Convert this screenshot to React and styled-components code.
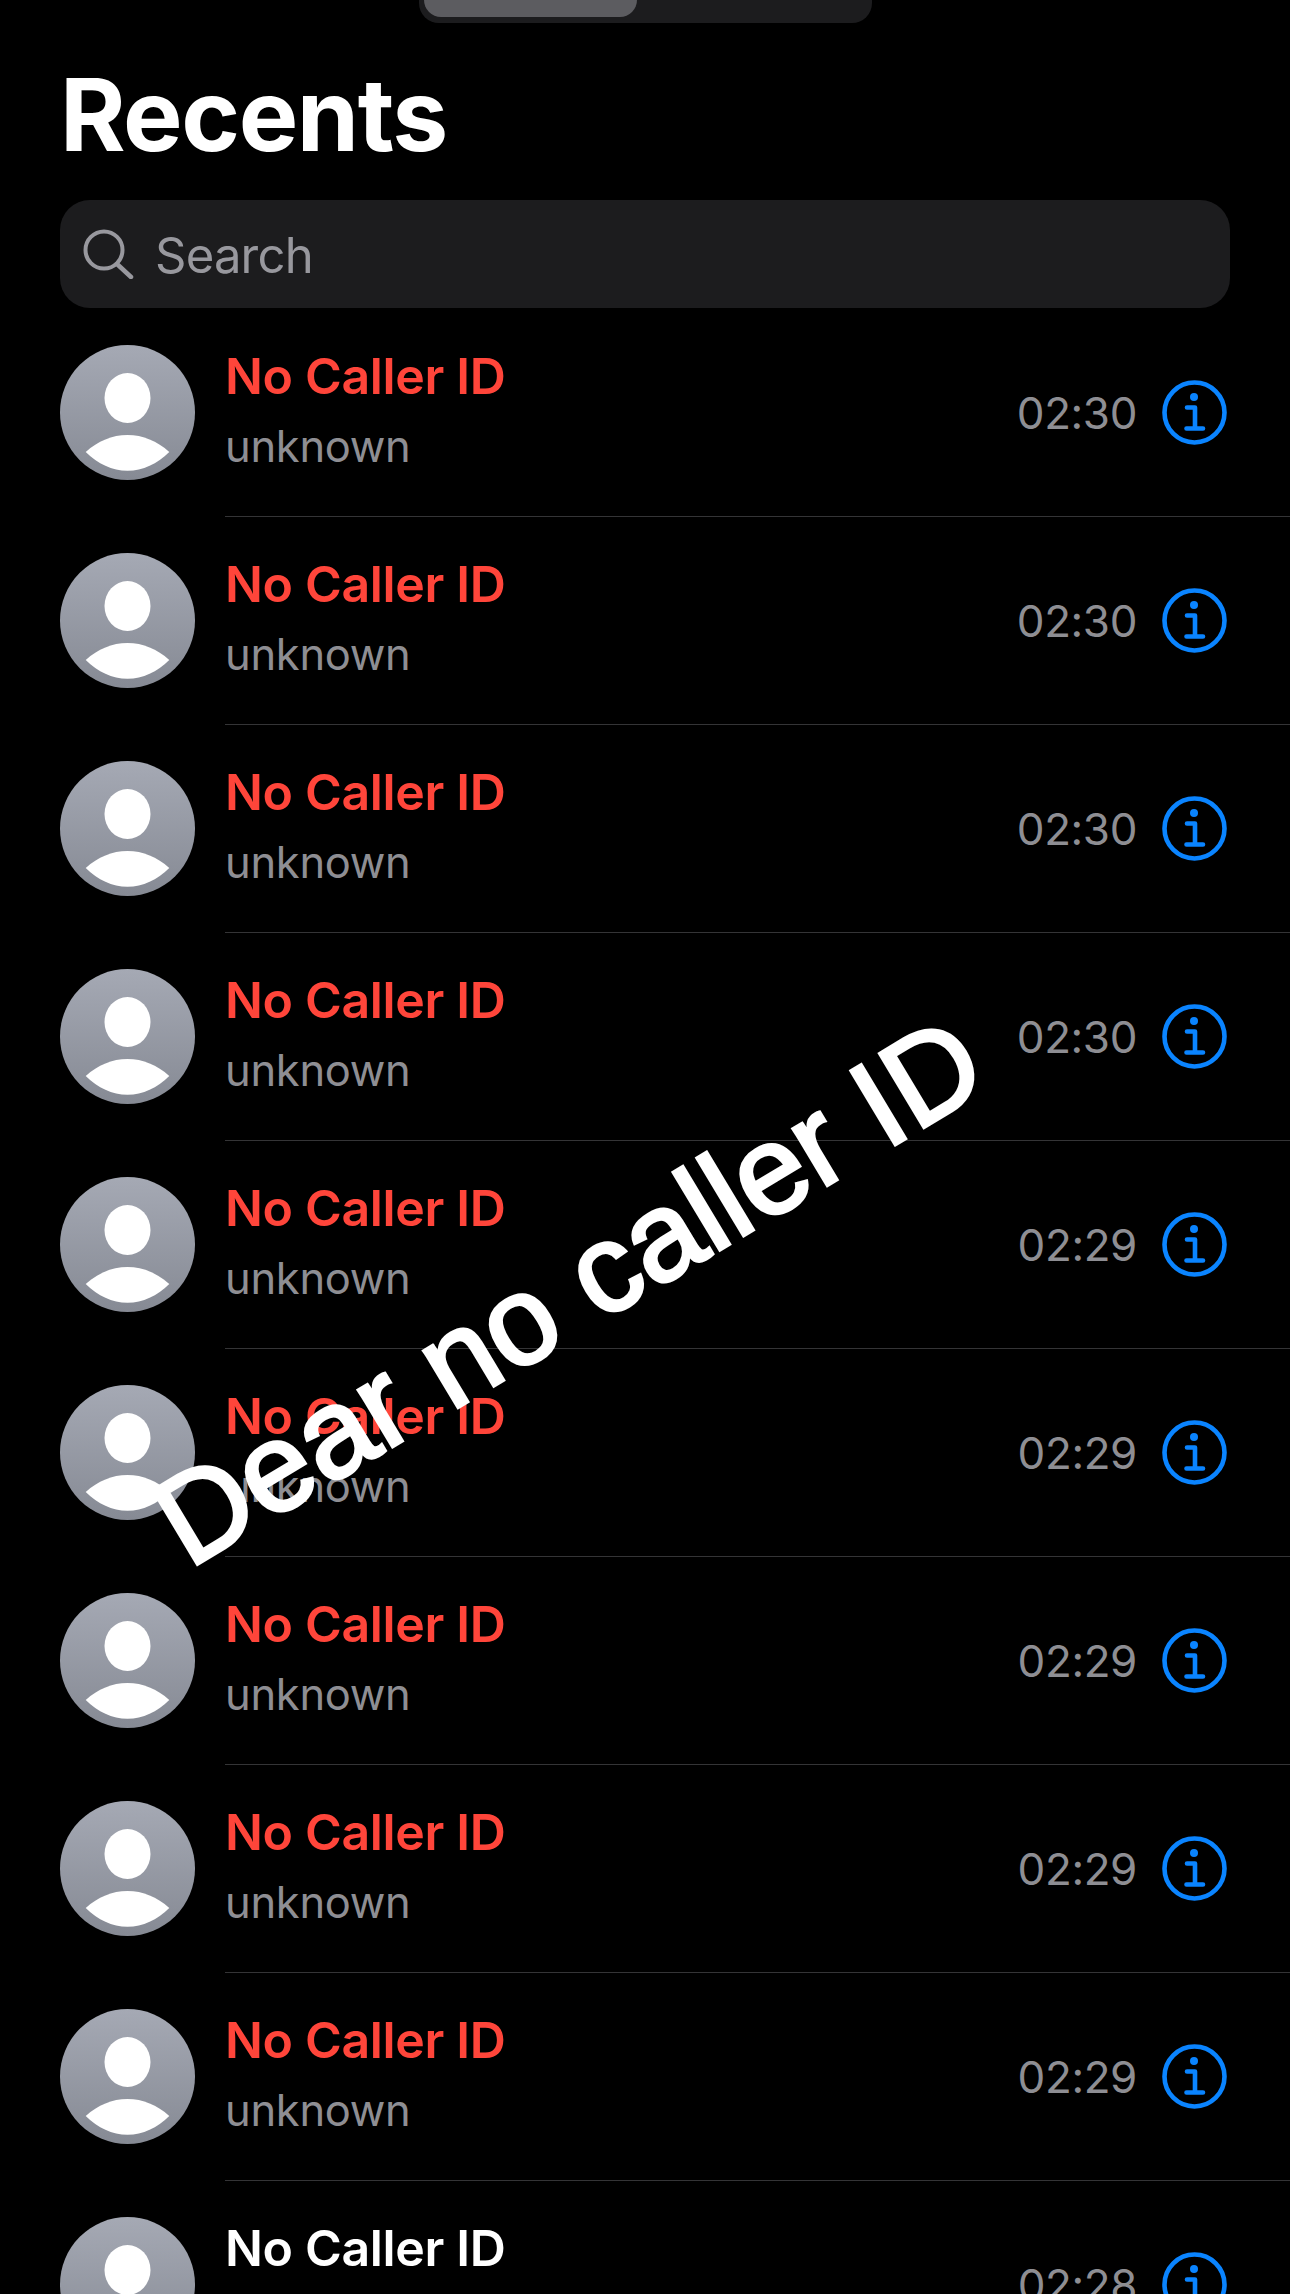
import React from 'react'
import styled, { createGlobalStyle } from 'styled-components'

const GlobalStyle = createGlobalStyle`
  html, body {
    margin: 0;
    padding: 0;
    background: #000;
  }
  body {
    font-family: Inter, "Liberation Sans", sans-serif;
    overflow: hidden;
  }
`

const Screen = styled.div`
  position: relative;
  width: 1290px;
  height: 2294px;
  overflow: hidden;
  background: #000;
`

const Segmented = styled.div`
  width: 453px;
  height: 23px;
  margin: 0 auto;
  padding-left: 5px;
  box-sizing: border-box;
  background: #1c1c1e;
  border-radius: 0 0 20px 20px;
`

const SegmentThumb = styled.div`
  width: 213px;
  height: 17px;
  background: #5c5c60;
  border-radius: 0 0 18px 18px;
`

const Title = styled.h1`
  margin: 36px 0 0 60px;
  font-size: 100px;
  line-height: 112px;
  font-weight: 700;
  letter-spacing: -1.4px;
  color: #fff;
`

const SearchBar = styled.div`
  display: flex;
  align-items: center;
  gap: 20px;
  width: 1170px;
  height: 108px;
  margin: 29px 0 1px 60px;
  padding-left: 23px;
  box-sizing: border-box;
  background: #1c1c1e;
  border-radius: 30px;
`

const SearchLabel = styled.span`
  font-size: 49px;
  color: #98989e;
  letter-spacing: -0.8px;
  margin-top: 3px;
`

const Row = styled.div`
  display: flex;
  align-items: center;
  gap: 30px;
  height: 208px;
  padding-left: 60px;
`

const Avatar = styled.svg`
  width: 135px;
  height: 135px;
  flex-shrink: 0;
  margin-top: -2px;
`

const RowBody = styled.div`
  flex: 1;
  display: flex;
  align-items: center;
  align-self: stretch;
  padding-right: 63px;
  border-bottom: 1px solid #343436;
`

const Labels = styled.div`
  flex: 1;
  display: flex;
  flex-direction: column;
  gap: 10px;
  margin-top: -4px;
`

const CallerName = styled.div`
  font-size: 50px;
  line-height: 60px;
  font-weight: 600;
  letter-spacing: -0.35px;
  color: ${(p) => (p.$missed ? '#ff453a' : '#fff')};
`

const CallType = styled.div`
  font-size: 43.5px;
  line-height: 60px;
  letter-spacing: -0.3px;
  color: #8e8e93;
`

const CallTime = styled.span`
  font-size: 44px;
  letter-spacing: -0.4px;
  color: #8e8e93;
  margin-right: 25px;
`

const InfoButton = styled.svg`
  width: 65px;
  height: 65px;
  flex-shrink: 0;
`

const Caption = styled.div`
  position: absolute;
  left: 200px;
  top: 1458px;
  font-family: "Liberation Sans", Arial, sans-serif;
  font-size: 125px;
  line-height: 130px;
  white-space: nowrap;
  color: #fff;
  -webkit-text-stroke: 3.5px #fff;
  transform: rotate(-31deg);
  transform-origin: 0 100%;
`

const calls = [
  { id: 1, time: '02:30', missed: true },
  { id: 2, time: '02:30', missed: true },
  { id: 3, time: '02:30', missed: true },
  { id: 4, time: '02:30', missed: true },
  { id: 5, time: '02:29', missed: true },
  { id: 6, time: '02:29', missed: true },
  { id: 7, time: '02:29', missed: true },
  { id: 8, time: '02:29', missed: true },
  { id: 9, time: '02:29', missed: true },
  { id: 10, time: '02:28', missed: false },
]

const SearchIcon = () => (
  <svg width="52" height="50" viewBox="0 0 52 50" fill="none" stroke="#98989e" strokeWidth="4" strokeLinecap="round">
    <circle cx="21" cy="21" r="18.5" />
    <path d="M34 35 L48 48" strokeWidth="4.5" />
  </svg>
)

const PersonAvatar = ({ id }) => (
  <Avatar viewBox="0 0 135 135">
    <defs>
      <linearGradient id={`avatar-${id}`} x1="0" y1="0" x2="0" y2="1">
        <stop offset="0" stopColor="#a5a9b4" />
        <stop offset="1" stopColor="#868a94" />
      </linearGradient>
    </defs>
    <circle cx="67.5" cy="67.5" r="67.5" fill={`url(#avatar-${id})`} />
    <ellipse cx="67.5" cy="53" rx="23" ry="25" fill="#fff" />
    <path
      d="M25.7 107 C38 96 52 90 67.5 90 C83 90 97 96 109.3 107 C97 119 83 125.7 67.5 125.7 C52 125.7 38 119 25.7 107 Z"
      fill="#fff"
    />
  </Avatar>
)

const InfoIcon = () => (
  <InfoButton viewBox="0 0 65 65" fill="none" stroke="#0a84ff">
    <circle cx="32.5" cy="32.5" r="30" strokeWidth="4.6" />
    <circle cx="32" cy="17" r="4" fill="#0a84ff" stroke="none" />
    <path d="M25 27.5 H33 V48 M24.5 48.5 H41" strokeWidth="4.6" strokeLinecap="round" strokeLinejoin="round" />
  </InfoButton>
)

export default function App() {
  return (
    <Screen>
      <GlobalStyle />
      <Segmented>
        <SegmentThumb />
      </Segmented>
      <Title>Recents</Title>
      <SearchBar>
        <SearchIcon />
        <SearchLabel>Search</SearchLabel>
      </SearchBar>
      {calls.map((call) => (
        <Row key={call.id}>
          <PersonAvatar id={call.id} />
          <RowBody>
            <Labels>
              <CallerName $missed={call.missed}>No Caller ID</CallerName>
              <CallType>unknown</CallType>
            </Labels>
            <CallTime>{call.time}</CallTime>
            <InfoIcon />
          </RowBody>
        </Row>
      ))}
      <Caption>Dear no caller ID</Caption>
    </Screen>
  )
}
